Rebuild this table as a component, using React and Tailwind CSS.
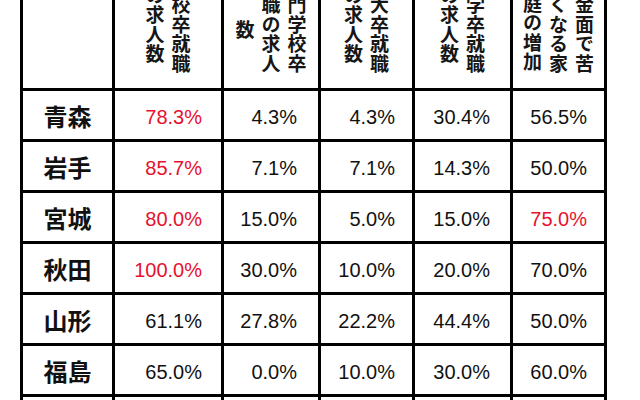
const HEADERS = [
  // each column of vertical text, right to left, with its top offset
  [
    { text: "高校卒就職", top: "mt-[-24px]" },
    { text: "の求人数", top: "mt-[-14px]" },
  ],
  [
    { text: "専門学校卒", top: "mt-[-24px]" },
    { text: "就職の求人", top: "mt-[-24px]" },
    { text: "数", top: "mt-[20px]" },
  ],
  [
    { text: "短大卒就職", top: "mt-[-24px]" },
    { text: "の求人数", top: "mt-[-14px]" },
  ],
  [
    { text: "大学卒就職", top: "mt-[-24px]" },
    { text: "の求人数", top: "mt-[-14px]" },
  ],
  [
    { text: "資金面で苦", top: "mt-[-24px]" },
    { text: "しくなる家", top: "mt-[-24px]" },
    { text: "庭の増加", top: "mt-[-6px]" },
  ],
];

const ROWS = [
  { name: "青森", values: ["78.3%", "4.3%", "4.3%", "30.4%", "56.5%"], red: [0] },
  { name: "岩手", values: ["85.7%", "7.1%", "7.1%", "14.3%", "50.0%"], red: [0] },
  { name: "宮城", values: ["80.0%", "15.0%", "5.0%", "15.0%", "75.0%"], red: [0, 4] },
  { name: "秋田", values: ["100.0%", "30.0%", "10.0%", "20.0%", "70.0%"], red: [0] },
  { name: "山形", values: ["61.1%", "27.8%", "22.2%", "44.4%", "50.0%"], red: [] },
  { name: "福島", values: ["65.0%", "0.0%", "10.0%", "30.0%", "60.0%"], red: [] },
  { name: "", values: ["", "", "", "", ""], red: [] },
];

const PAD = ["pr-[19px]", "pr-[21px]", "pr-[17px]", "pr-[20px]", "pr-[17px]"];

const JP = "font-['Noto_Sans_CJK_JP',sans-serif]";

export default function App() {
  return (
    <div className="h-[400px] w-[640px] overflow-hidden bg-white">
      <div className="ml-[20px] grid w-[587px] grid-cols-[89px_106px_94px_91px_95px_91px] grid-rows-[88px_repeat(7,48px)] gap-[3px] bg-black px-[3px] pb-[3px]">
        <div className="bg-white" />
        {HEADERS.map((cols, i) => (
          <div
            key={i}
            className={`flex flex-row-reverse items-start justify-center gap-[7px] overflow-hidden bg-white text-[19px] font-bold text-[#161616] ${JP}`}
          >
            {cols.map((c) => (
              <div
                key={c.text}
                className={`[writing-mode:vertical-rl] leading-none tracking-[0.5px] ${c.top}`}
              >
                {c.text}
              </div>
            ))}
          </div>
        ))}

        {ROWS.map((row, r) => (
          <Row key={r} row={row} />
        ))}
      </div>
    </div>
  );
}

function Row({ row }) {
  return (
    <>
      <div
        className={`flex items-center justify-center bg-white pt-[2px] text-[24px] font-bold text-[#111] ${JP}`}
      >
        {row.name}
      </div>
      {row.values.map((v, i) => (
        <div
          key={i}
          className={`flex items-center justify-end bg-white pt-[4px] font-['Liberation_Sans',sans-serif] text-[20px] ${PAD[i]} ${
            row.red.includes(i) ? "text-[#e8102e]" : "text-[#111]"
          }`}
        >
          {v}
        </div>
      ))}
    </>
  );
}
